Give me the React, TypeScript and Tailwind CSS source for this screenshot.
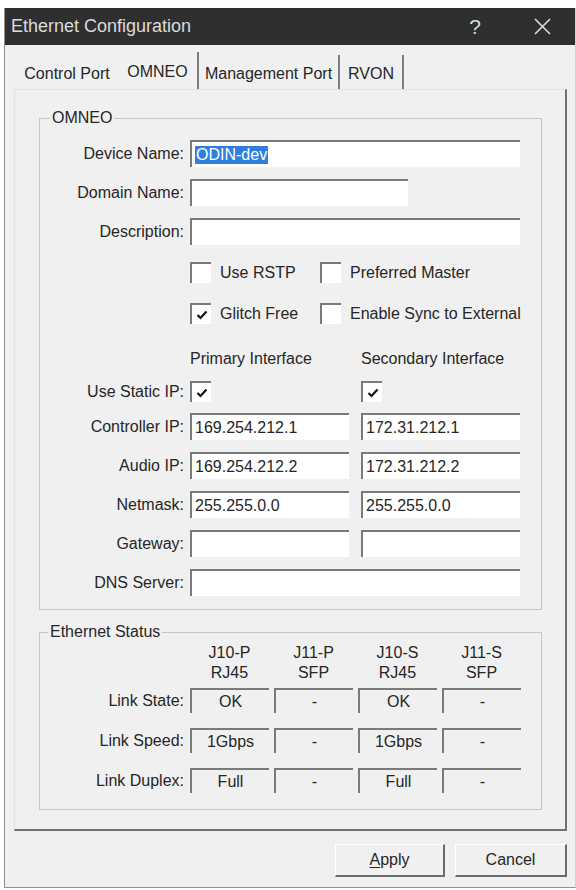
import type { ReactNode } from 'react';

const CheckMark = () => (
    <svg width="12" height="10" viewBox="0 0 12 10">
        <path
            d="M1.5 5 L4.5 8 L10.5 1.5"
            fill="none"
            stroke="#111"
            strokeWidth="2.2"
        />
    </svg>
);

const CheckBox = ({ checked }: { checked?: boolean }) => (
    <div className="flex h-[21px] w-[21px] shrink-0 items-center justify-center border-t-2 border-l-2 border-[#7a7a7a] bg-white">
        {checked && <CheckMark />}
    </div>
);

const TextBox = ({
    value = '',
    width,
    selected,
}: {
    value?: string;
    width: string;
    selected?: boolean;
}) => (
    <div
        className={`flex h-[27px] items-center border-t-2 border-l-2 border-[#7a7a7a] bg-white pl-[3px] ${width}`}
    >
        {selected ? (
            <span className="bg-[#2f7fde] px-[1px] text-white">{value}</span>
        ) : (
            <span>{value}</span>
        )}
    </div>
);

const StatusBox = ({ value }: { value: string }) => (
    <div className="flex h-[25px] w-[79px] items-center justify-center border-t-2 border-l-2 border-[#7a7a7a]">
        {value}
    </div>
);

const Row = ({
    label,
    className,
    children,
}: {
    label?: string;
    className: string;
    children: ReactNode;
}) => (
    <div className={`flex items-center leading-[18px] ${className}`}>
        <div className="w-[144px] text-right">{label}</div>
        <div className="ml-[6px] flex items-center">{children}</div>
    </div>
);

const Tab = ({
    label,
    width,
    selected,
    divider,
}: {
    label: string;
    width: string;
    selected?: boolean;
    divider?: boolean;
}) => (
    <div
        className={`flex items-center justify-center ${width} ${
            selected ? 'h-[38px] -mb-[1px] pt-[1px]' : 'h-[34px] pt-[4px]'
        } ${divider ? 'border-r-2 border-[#7c7c7c]' : ''}`}
    >
        {label}
    </div>
);

const statusRows = [
    { label: 'Link State:', values: ['OK', '-', 'OK', '-'], mt: 'mt-[5px]' },
    { label: 'Link Speed:', values: ['1Gbps', '-', '1Gbps', '-'], mt: 'mt-[15px]' },
    { label: 'Link Duplex:', values: ['Full', '-', 'Full', '-'], mt: 'mt-[15px]' },
];

const ports = [
    ['J10-P', 'RJ45'],
    ['J11-P', 'SFP'],
    ['J10-S', 'RJ45'],
    ['J11-S', 'SFP'],
];

export default function App() {
    return (
        <div className="h-[890px] w-[576px] bg-white pt-[8px] pl-[4px] font-['Liberation_Sans',Arial,sans-serif] text-[16px] text-[#262626]">
            <div className="flex h-[880px] flex-col border-r border-b border-l border-[#8f8f8f] border-r-[#d2d2d2] bg-[#f0f0f0]">
                {/* Barra de título */}
                <div className="flex h-[37px] shrink-0 items-center bg-[#2f2f2f] pl-[6px] text-[#dcdcdc]">
                    <span className="text-[18px]">Ethernet Configuration</span>
                    <span className="ml-auto w-[20px] text-center text-[21px]">?</span>
                    <div className="mr-[13px] ml-[37px] flex w-[40px] justify-center">
                        <svg width="17" height="17" viewBox="0 0 17 17">
                            <path
                                d="M1 1 L16 16 M16 1 L1 16"
                                stroke="#dcdcdc"
                                strokeWidth="1.6"
                            />
                        </svg>
                    </div>
                </div>

                {/* Abas */}
                <div className="flex h-[44px] shrink-0 items-end pl-[11px]">
                    <Tab label="Control Port" width="w-[102px]" />
                    <Tab label="OMNEO" width="w-[81px]" selected divider />
                    <Tab label="Management Port" width="w-[141px]" divider />
                    <Tab label="RVON" width="w-[64px]" divider />
                </div>

                {/* Painel da aba */}
                <div className="mr-[8px] ml-[9px] flex h-[742px] shrink-0 flex-col border-t border-l border-[#e2e2e2] border-r-2 border-b-2 border-r-[#707070] border-b-[#707070]">
                    <fieldset className="mt-[19px] ml-[24px] w-[503px] border border-[#c6c6c6] pb-[13px]">
                        <legend className="ml-[10px] px-[2px] leading-[18px]">OMNEO</legend>

                        <Row label="Device Name:" className="mt-[13px]">
                            <TextBox value="ODIN-dev" width="w-[330px]" selected />
                        </Row>
                        <Row label="Domain Name:" className="mt-[12px]">
                            <TextBox width="w-[218px]" />
                        </Row>
                        <Row label="Description:" className="mt-[12px]">
                            <TextBox width="w-[330px]" />
                        </Row>

                        <Row className="mt-[17px]">
                            <div className="flex w-[130px] items-center gap-[9px]">
                                <CheckBox />
                                <span>Use RSTP</span>
                            </div>
                            <div className="flex items-center gap-[9px]">
                                <CheckBox />
                                <span>Preferred Master</span>
                            </div>
                        </Row>
                        <Row className="mt-[20px]">
                            <div className="flex w-[130px] items-center gap-[9px]">
                                <CheckBox checked />
                                <span>Glitch Free</span>
                            </div>
                            <div className="flex items-center gap-[9px]">
                                <CheckBox />
                                <span>Enable Sync to External</span>
                            </div>
                        </Row>

                        <Row className="mt-[26px]">
                            <div className="flex gap-[12px]">
                                <span className="w-[159px]">Primary Interface</span>
                                <span className="w-[159px]">Secondary Interface</span>
                            </div>
                        </Row>
                        <Row label="Use Static IP:" className="mt-[13px]">
                            <div className="flex gap-[12px]">
                                <div className="w-[159px]">
                                    <CheckBox checked />
                                </div>
                                <div className="w-[159px]">
                                    <CheckBox checked />
                                </div>
                            </div>
                        </Row>
                        <Row label="Controller IP:" className="mt-[11px]">
                            <div className="flex gap-[12px]">
                                <TextBox value="169.254.212.1" width="w-[159px]" />
                                <TextBox value="172.31.212.1" width="w-[159px]" />
                            </div>
                        </Row>
                        <Row label="Audio IP:" className="mt-[12px]">
                            <div className="flex gap-[12px]">
                                <TextBox value="169.254.212.2" width="w-[159px]" />
                                <TextBox value="172.31.212.2" width="w-[159px]" />
                            </div>
                        </Row>
                        <Row label="Netmask:" className="mt-[12px]">
                            <div className="flex gap-[12px]">
                                <TextBox value="255.255.0.0" width="w-[159px]" />
                                <TextBox value="255.255.0.0" width="w-[159px]" />
                            </div>
                        </Row>
                        <Row label="Gateway:" className="mt-[12px]">
                            <div className="flex gap-[12px]">
                                <TextBox width="w-[159px]" />
                                <TextBox width="w-[159px]" />
                            </div>
                        </Row>
                        <Row label="DNS Server:" className="mt-[12px]">
                            <TextBox width="w-[330px]" />
                        </Row>
                    </fieldset>

                    <fieldset className="mt-[13px] ml-[24px] w-[503px] border border-[#c6c6c6] pb-[16px]">
                        <legend className="ml-[8px] px-[2px] leading-[18px]">Ethernet Status</legend>

                        <div className="mt-[2px] ml-[150px] flex gap-[5px] leading-[20px]">
                            {ports.map(([name, kind]) => (
                                <div key={name} className="flex w-[79px] flex-col items-center">
                                    <span>{name}</span>
                                    <span>{kind}</span>
                                </div>
                            ))}
                        </div>

                        {statusRows.map((row) => (
                            <Row key={row.label} label={row.label} className={row.mt}>
                                <div className="flex gap-[5px]">
                                    {row.values.map((value, i) => (
                                        <StatusBox key={i} value={value} />
                                    ))}
                                </div>
                            </Row>
                        ))}
                    </fieldset>
                </div>

                {/* Botões */}
                <div className="mt-[13px] flex justify-end gap-[10px] pr-[8px]">
                    <button className="h-[33px] w-[110px] border-t border-l border-white border-r-2 border-b-2 border-r-[#6c6c6c] border-b-[#6c6c6c]">
                        <span className="underline underline-offset-2">A</span>pply
                    </button>
                    <button className="h-[33px] w-[112px] border-t border-l border-white border-r-2 border-b-2 border-r-[#6c6c6c] border-b-[#6c6c6c]">
                        Cancel
                    </button>
                </div>
            </div>
        </div>
    );
}
